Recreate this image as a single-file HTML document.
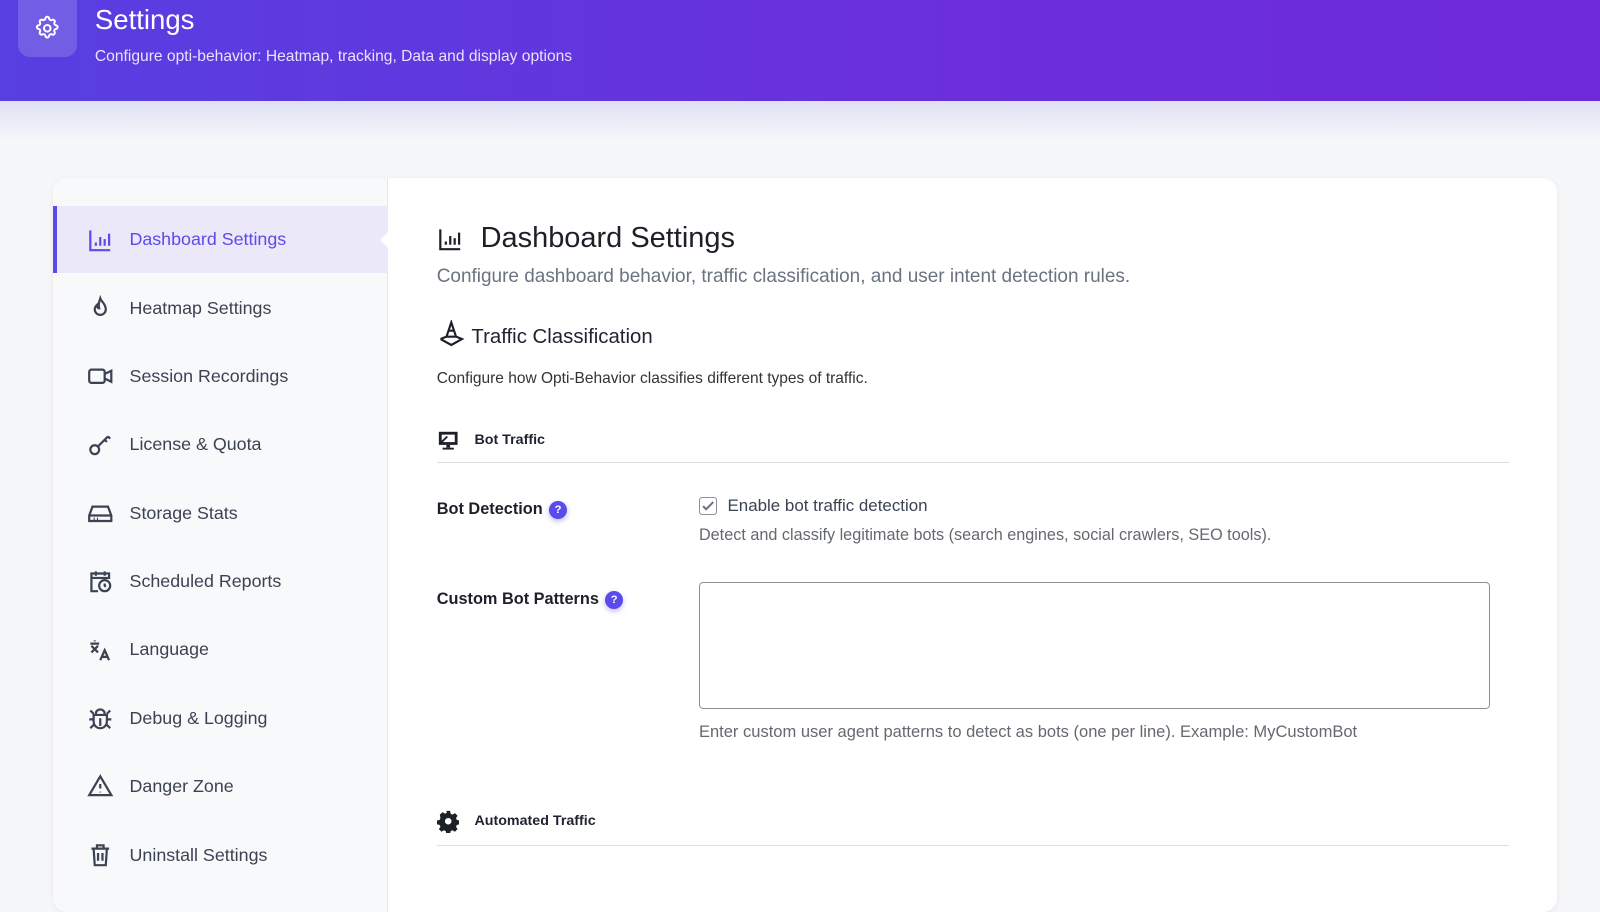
<!DOCTYPE html>
<html><head><meta charset="utf-8"><style>
*{box-sizing:border-box;margin:0;padding:0}
body{width:1600px;height:876px;overflow:hidden;background:#f6f7f9;font-family:"Liberation Sans",sans-serif;color:#1f2330;position:relative}
.wrap{position:absolute;left:0;top:0;width:1568px;height:860px;zoom:1.0204}
.hdr{position:absolute;left:0;top:0;width:1568px;height:99px;background:linear-gradient(90deg,#573fe1,#6b2fdc 60%,#6e2ad9)}
.shadow{position:absolute;left:0;top:99px;width:1568px;height:40px;background:linear-gradient(#dfe0f3,#f6f7f9)}
.hicon{position:absolute;left:18px;top:0;width:57px;height:56px;border-radius:0 0 12px 12px;background:rgba(255,255,255,.16);display:flex;align-items:center;justify-content:center}
.ht{position:absolute;left:93px;top:4px;color:#fff;font-size:27px}
.hs{position:absolute;left:93px;top:47px;color:#e8e2ff;font-size:15.3px}
.card{position:absolute;left:52px;top:174px;width:1474px;height:720px;background:#fff;border-radius:14px;box-shadow:0 1px 6px rgba(0,0,0,.06);overflow:hidden}
.side{position:absolute;left:0;top:0;width:328px;height:100%;background:#f8f9fb;border-right:1px solid #e6e8ec}
.it{position:absolute;left:0;width:328px;height:66px;display:flex;align-items:center;padding-left:33px;font-size:17.5px;color:#3b4252}
.it svg{margin-right:16px}
.act{background:#ebe8fa;color:#5b4bea;border-left:4px solid #5b4bea;padding-left:29px}
.act:after{content:"";position:absolute;right:0;top:25px;border:8px solid transparent;border-right-color:#fff}
.m{position:absolute;left:376px;font-size:14px}
.hr{position:absolute;left:376px;width:1051px;height:1px;background:#dcdfe4}
.q{display:inline-block;width:18px;height:18px;border-radius:50%;background:#5b4bea;color:#fff;font-size:11px;font-weight:bold;text-align:center;line-height:18px;margin-left:6px;vertical-align:1px;box-shadow:0 2px 5px rgba(91,75,234,.4)}
</style></head><body>
<div class="wrap">
<div class="hdr"></div><div class="shadow"></div>
<div class="hicon"><svg width="26" height="26" viewBox="0 0 24 24" fill="none" stroke="#fff" stroke-width="1.8"><path d="M10.3 3.3a1.7 1.7 0 0 1 3.4 0 1.7 1.7 0 0 0 2.6 1.1 1.7 1.7 0 0 1 2.3 2.3 1.7 1.7 0 0 0 1.1 2.6 1.7 1.7 0 0 1 0 3.4 1.7 1.7 0 0 0-1.1 2.6 1.7 1.7 0 0 1-2.3 2.3 1.7 1.7 0 0 0-2.6 1.1 1.7 1.7 0 0 1-3.4 0 1.7 1.7 0 0 0-2.6-1.1 1.7 1.7 0 0 1-2.3-2.3 1.7 1.7 0 0 0-1.1-2.6 1.7 1.7 0 0 1 0-3.4 1.7 1.7 0 0 0 1.1-2.6 1.7 1.7 0 0 1 2.3-2.3 1.7 1.7 0 0 0 2.6-1.1z"/><circle cx="12" cy="12" r="3"/></svg></div>
<div class="ht">Settings</div>
<div class="hs">Configure opti-behavior: Heatmap, tracking, Data and display options</div>
<div class="card">
<div class="side">
<div class="it act" style="top:28px"><svg width="26" height="26" viewBox="0 0 24 24" fill="none" stroke="#5b4bea" stroke-width="2"><path d="M3 3v18h18M8 17v-3M12 17V9M16 17v-6M20 17V6"/></svg>Dashboard Settings</div>
<div class="it" style="top:95px"><svg width="26" height="26" viewBox="0 0 24 24" fill="none" stroke="#3b4252" stroke-width="2"><path d="M12 3c1 3 5 5 5 10a5 5 0 0 1-10 0c0-2 1-3 2-4 0 2 1 3 2 3-1-3 0-6 1-9z"/></svg>Heatmap Settings</div>
<div class="it" style="top:162px"><svg width="26" height="26" viewBox="0 0 24 24" fill="none" stroke="#3b4252" stroke-width="2"><rect x="2" y="6" width="14" height="12" rx="2"/><path d="M16 10l6-3v10l-6-3"/></svg>Session Recordings</div>
<div class="it" style="top:229px"><svg width="26" height="26" viewBox="0 0 24 24" fill="none" stroke="#3b4252" stroke-width="2"><circle cx="7" cy="16" r="4"/><path d="M10 13l9-9M16 7l2 2M19 4l2 2"/></svg>License &amp; Quota</div>
<div class="it" style="top:296px"><svg width="26" height="26" viewBox="0 0 24 24" fill="none" stroke="#3b4252" stroke-width="2"><path d="M5 6h14l3 8v5H2v-5z M2 14h20M6 17h1M9 17h1"/></svg>Storage Stats</div>
<div class="it" style="top:363px"><svg width="26" height="26" viewBox="0 0 24 24" fill="none" stroke="#3b4252" stroke-width="2"><path d="M10 21H4V5h16v5M4 9h16M8 3v4M16 3v4"/><circle cx="16" cy="16" r="5"/><path d="M16 14v2l1 1"/></svg>Scheduled Reports</div>
<div class="it" style="top:430px"><svg width="26" height="26" viewBox="0 0 24 24" fill="none" stroke="#3b4252" stroke-width="2"><path d="M3 6h8M7 3v1M4 8l6 6M10 8l-6 6M12 21l4-9 4 9M13.5 18h5"/></svg>Language</div>
<div class="it" style="top:497px"><svg width="26" height="26" viewBox="0 0 24 24" fill="none" stroke="#3b4252" stroke-width="2"><path d="M8 8a4 4 0 0 1 8 0M6 9h12v6a6 6 0 0 1-12 0zM12 12v7M2 13h4M18 13h4M3 5l3 3M21 5l-3 3M3 21l3-3M21 21l-3-3"/></svg>Debug &amp; Logging</div>
<div class="it" style="top:564px"><svg width="26" height="26" viewBox="0 0 24 24" fill="none" stroke="#3b4252" stroke-width="2"><path d="M12 3L2 20h20zM12 10v4M12 17v.5"/></svg>Danger Zone</div>
<div class="it" style="top:631px"><svg width="26" height="26" viewBox="0 0 24 24" fill="none" stroke="#3b4252" stroke-width="2"><path d="M4 6h16M9 6V3h6v3M6 6l1 15h10l1-15M10 10v7M14 10v7"/></svg>Uninstall Settings</div>
</div>
<div class="m" style="top:44px;font-size:28.4px;color:#1d2027;display:flex;align-items:center"><svg width="26" height="26" viewBox="0 0 24 24" fill="none" stroke="#1d2027" stroke-width="2" style="margin-right:17px"><path d="M3 3v18h18M8 17v-3M12 17V9M16 17v-6M20 17V6"/></svg>Dashboard Settings</div>
<div class="m" style="top:87px;font-size:18.6px;color:#6b7280">Configure dashboard behavior, traffic classification, and user intent detection rules.</div>
<div class="m" style="top:140px;font-size:20px;display:flex;align-items:flex-end"><svg width="28" height="28" viewBox="0 0 24 24" fill="none" stroke="#1d2027" stroke-width="1.8" style="margin-right:6px"><path d="M12 2l-4 12h8zM9 9h6M3 16l9 5 9-5-5-2M8 14l-5 2"/></svg>Traffic Classification</div>
<div class="m" style="top:189px;color:#333;font-size:15.2px">Configure how Opti-Behavior classifies different types of traffic.</div>
<div class="m" style="top:246px;font-weight:bold;font-size:14px;display:flex;align-items:center"><svg width="22" height="22" viewBox="0 0 24 24" style="margin-right:15px"><rect x="2" y="3" width="20" height="14" fill="#1d2027"/><rect x="5" y="6" width="14" height="8" fill="#fff"/><path d="M5 14l6-6" stroke="#1d2027" stroke-width="2"/><rect x="10" y="17" width="4" height="3" fill="#1d2027"/><rect x="6" y="20" width="12" height="2" fill="#1d2027"/></svg>Bot Traffic</div>
<div class="hr" style="top:279px"></div>
<div class="m" style="top:316px;font-size:16px;font-weight:bold;color:#1d2027">Bot Detection<span class="q">?</span></div>
<div class="m" style="left:633px;top:312px;font-size:16.6px;color:#3b4252;display:flex;align-items:center"><span style="display:inline-block;width:18px;height:18px;border:1px solid #8c8f94;border-radius:3px;margin-right:10px;position:relative"><svg width="16" height="16" viewBox="0 0 16 16" style="position:absolute;left:0;top:0"><path d="M3 8l3 3 7-7" fill="none" stroke="#6b7280" stroke-width="2"/></svg></span>Enable bot traffic detection</div>
<div class="m" style="left:633px;top:341px;font-size:15.9px;color:#646970">Detect and classify legitimate bots (search engines, social crawlers, SEO tools).</div>
<div class="m" style="top:404px;font-size:16px;font-weight:bold;color:#1d2027">Custom Bot Patterns<span class="q">?</span></div>
<div style="position:absolute;left:633px;top:396px;width:775px;height:125px;border:1px solid #8c8f94;border-radius:4px"></div>
<div class="m" style="left:633px;top:534px;font-size:16.2px;color:#646970">Enter custom user agent patterns to detect as bots (one per line). Example: MyCustomBot</div>
<div class="m" style="top:620px;font-weight:bold;font-size:14px;display:flex;align-items:center"><svg width="22" height="22" viewBox="0 0 24 24" style="margin-right:15px"><path fill="#1d2027" d="M10 1h4l.6 3 2 1 2.6-1.7 2.8 2.8-1.7 2.6 1 2 3 .6v4l-3 .6-1 2 1.7 2.6-2.8 2.8-2.6-1.7-2 1-.6 3h-4l-.6-3-2-1-2.6 1.7-2.8-2.8 1.7-2.6-1-2-3-.6v-4l3-.6 1-2L3 5.1 5.9 2.3 8.5 4l2-1z"/><circle cx="12" cy="12" r="3.5" fill="#fff"/></svg>Automated Traffic</div>
<div class="hr" style="top:654px"></div>
</div>
</div>
</body></html>
